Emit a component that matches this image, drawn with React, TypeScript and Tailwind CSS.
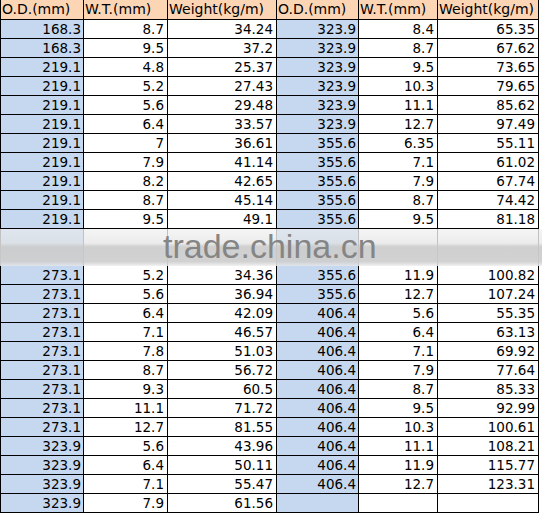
const top: string[][] = [
  ["168.3", "8.7", "34.24", "323.9", "8.4", "65.35"],
  ["168.3", "9.5", "37.2", "323.9", "8.7", "67.62"],
  ["219.1", "4.8", "25.37", "323.9", "9.5", "73.65"],
  ["219.1", "5.2", "27.43", "323.9", "10.3", "79.65"],
  ["219.1", "5.6", "29.48", "323.9", "11.1", "85.62"],
  ["219.1", "6.4", "33.57", "323.9", "12.7", "97.49"],
  ["219.1", "7", "36.61", "355.6", "6.35", "55.11"],
  ["219.1", "7.9", "41.14", "355.6", "7.1", "61.02"],
  ["219.1", "8.2", "42.65", "355.6", "7.9", "67.74"],
  ["219.1", "8.7", "45.14", "355.6", "8.7", "74.42"],
  ["219.1", "9.5", "49.1", "355.6", "9.5", "81.18"],
];

const bottom: string[][] = [
  ["273.1", "5.2", "34.36", "355.6", "11.9", "100.82"],
  ["273.1", "5.6", "36.94", "355.6", "12.7", "107.24"],
  ["273.1", "6.4", "42.09", "406.4", "5.6", "55.35"],
  ["273.1", "7.1", "46.57", "406.4", "6.4", "63.13"],
  ["273.1", "7.8", "51.03", "406.4", "7.1", "69.92"],
  ["273.1", "8.7", "56.72", "406.4", "7.9", "77.64"],
  ["273.1", "9.3", "60.5", "406.4", "8.7", "85.33"],
  ["273.1", "11.1", "71.72", "406.4", "9.5", "92.99"],
  ["273.1", "12.7", "81.55", "406.4", "10.3", "100.61"],
  ["323.9", "5.6", "43.96", "406.4", "11.1", "108.21"],
  ["323.9", "6.4", "50.11", "406.4", "11.9", "115.77"],
  ["323.9", "7.1", "55.47", "406.4", "12.7", "123.31"],
  ["323.9", "7.9", "61.56", "", "", ""],
];

const headers = ["O.D.(mm)", "W.T.(mm)", "Weight(kg/m)", "O.D.(mm)", "W.T.(mm)", "Weight(kg/m)"];

const cols = "grid grid-cols-[84px_84px_109px_82px_79px_101px]";

function Row({ cells }: { cells: string[] }) {
  return (
    <div className={cols}>
      {cells.map((c, i) => {
        const blue = i === 0 || i === 3;
        return (
          <div
            key={i}
            className={
              "h-[19px] border-b border-r border-black text-right leading-[18px] " +
              (i === 0 ? "border-l " : "") +
              (blue ? "bg-[#c6d8ef] pr-[2px]" : "bg-white pr-[3px]")
            }
          >
            {c}
          </div>
        );
      })}
    </div>
  );
}

export default function App() {
  return (
    <div className="w-[542px] h-[517px] overflow-hidden bg-white font-['DejaVu_Sans',sans-serif] text-[13.5px] text-black">
      <div className={cols}>
        {headers.map((h, i) => (
          <div
            key={i}
            className={
              "h-[20px] border-b border-r border-black bg-[#fcd5b4] pl-[1px] text-[14px] leading-[19px] whitespace-nowrap " +
              (i === 0 ? "border-l" : "")
            }
          >
            {h}
          </div>
        ))}
      </div>

      {top.map((r, i) => (
        <Row key={"t" + i} cells={r} />
      ))}

      <div className="relative h-[37px]">
        <div className={cols + " h-full"}>
          {[0, 1, 2, 3, 4, 5].map((i) => (
            <div
              key={i}
              className={
                "h-full border-r border-[#777] " +
                (i === 0 ? "border-l " : "") +
                (i === 0 || i === 3 ? "bg-[#c6d8ef]" : "bg-white")
              }
            />
          ))}
        </div>
        <div className="absolute inset-0 bg-[linear-gradient(to_bottom,rgba(238,238,238,0.6)_0%,rgba(228,228,228,0.7)_38%,rgba(204,204,204,0.93)_48%,rgba(206,206,206,0.93)_88%,rgba(236,236,236,0.7)_100%)]" />
        <div className="absolute left-[163px] top-0 font-['Liberation_Sans',Arial,sans-serif] text-[34px] leading-[34px] text-[#858585]">
          trade.china.cn
        </div>
      </div>

      {bottom.map((r, i) => (
        <Row key={"b" + i} cells={r} />
      ))}
    </div>
  );
}
